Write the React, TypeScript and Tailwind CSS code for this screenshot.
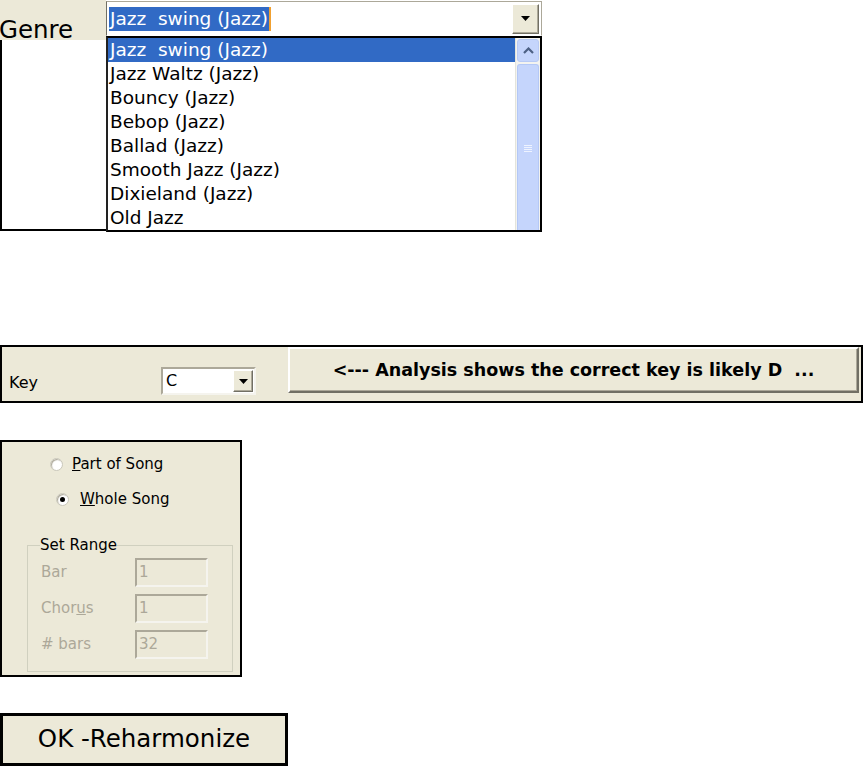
import React from "react";

const genres = [
  "Jazz  swing (Jazz)",
  "Jazz Waltz (Jazz)",
  "Bouncy (Jazz)",
  "Bebop (Jazz)",
  "Ballad (Jazz)",
  "Smooth Jazz (Jazz)",
  "Dixieland (Jazz)",
  "Old Jazz",
];

const DownArrow = () => (
  <svg width="9" height="5" viewBox="0 0 9 5">
    <path d="M0 0 H9 L4.5 5 Z" fill="#000" />
  </svg>
);

const DropButton = ({ className }: { className: string }) => (
  <div
    className={
      "flex items-center justify-center bg-[#ece9d8] border border-t-white border-l-white border-r-[#716f64] border-b-[#716f64] shadow-[inset_-1px_-1px_0_#aca899] " +
      className
    }
  >
    <DownArrow />
  </div>
);

const Radio = ({ checked }: { checked?: boolean }) => (
  <div className="w-[13px] h-[13px] rounded-full bg-white border border-[#c9c7ba] shadow-[inset_1px_1px_1px_#aca899] flex items-center justify-center">
    {checked && <div className="w-[5px] h-[5px] rounded-full bg-black" />}
  </div>
);

const RangeRow = ({ label, value }: { label: React.ReactNode; value: string }) => (
  <div className="flex items-center h-[29px]">
    <div className="w-[107px] pl-[13px] text-[15px] text-[#aca899]">{label}</div>
    <div className="w-[73px] h-[29px] bg-[#ece9d8] border-2 border-t-[#aca899] border-l-[#aca899] border-r-[#f5f4ee] border-b-[#f5f4ee] pl-[2px] text-[15px] text-[#aca899] leading-[25px]">
      {value}
    </div>
  </div>
);

export default function App() {
  return (
    <div className="bg-white w-[864px] h-[766px] text-black" style={{ fontFamily: '"DejaVu Sans", sans-serif' }}>
      {/* Genre combo */}
      <div className="flex w-[542px] h-[231px]">
        <div className="w-[106px] flex flex-col">
          <div className="h-[40px] bg-[#ece9d8] flex items-end">
            <span className="text-[24.5px] leading-none mb-[-2px] ml-[-1px]">Genre</span>
          </div>
          <div className="flex-1 border-l-2 border-b-2 border-black" />
        </div>
        <div className="w-[436px] flex flex-col">
          <div className="h-[37px] pt-[1px]">
            <div className="h-[35px] flex items-center bg-white border border-t-[#aca899] border-l-[#716f64] border-r-[#aca899] border-b-white pl-[2px] pr-[2px]">
              <div className="flex-1 flex items-center">
                <span className="bg-[#316ac5] text-white text-[18.5px] leading-[24px] px-[1px] border-r-2 border-[#f0a030] whitespace-pre">
                  {genres[0]}
                </span>
              </div>
              <DropButton className="w-[27px] h-[30px]" />
            </div>
          </div>
          <div className="flex-1 flex border-2 border-black border-l-[#222] bg-white">
            <div className="flex-1">
              {genres.map((g, i) => (
                <div
                  key={g}
                  className={
                    "h-[24px] leading-[24px] pl-[2px] text-[18.5px] whitespace-pre " +
                    (i === 0 ? "bg-[#316ac5] text-white" : "text-black")
                  }
                >
                  {g}
                </div>
              ))}
            </div>
            <div className="w-[25px] flex flex-col bg-[#f3f3f0] border-l border-[#e4e4dc] px-[1px] pt-[1px]">
              <div className="h-[23px] rounded-[3px] bg-[#c5d5fc] border border-[#b8caf5] flex items-center justify-center">
                <svg width="11" height="7" viewBox="0 0 11 7">
                  <path d="M1 6 L5.5 1.5 L10 6" stroke="#4d6185" strokeWidth="2.2" fill="none" />
                </svg>
              </div>
              <div className="flex-1 mt-[2px] rounded-t-[3px] bg-[#c5d5fc] border border-b-0 border-[#b4c8f6] flex items-center justify-center">
                <svg width="8" height="8" viewBox="0 0 8 8">
                  <path d="M0 1.5 H8 M0 3.5 H8 M0 5.5 H8 M0 7.5 H8" stroke="#eef3ff" strokeWidth="1" />
                </svg>
              </div>
            </div>
          </div>
        </div>
      </div>

      {/* Key bar */}
      <div className="mt-[114px] w-[863px] h-[58px] border-2 border-black bg-[#ece9d8] flex items-start">
        <div className="ml-[7px] mt-[27px] text-[16px] leading-[18px] w-[152px]">Key</div>
        <div className="mt-[20px] w-[95px] h-[28px] bg-white border-2 border-t-[#aca899] border-l-[#aca899] border-r-[#f5f4ee] border-b-[#f5f4ee] flex items-center pl-[3px]">
          <span className="flex-1 text-[16px]">C</span>
          <DropButton className="w-[20px] h-[22px] mr-[1px]" />
        </div>
        <div className="ml-[32px] w-[571px] h-[46px] bg-[#ece9d8] border-2 border-t-white border-l-white border-r-[#716f64] border-b-[#716f64] shadow-[inset_-1px_-1px_0_#aca899] flex items-center justify-center">
          <span className="text-[17.5px] font-bold whitespace-pre">{"<--- Analysis shows the correct key is likely D  ..."}</span>
        </div>
      </div>

      {/* Range panel */}
      <div className="mt-[37px] w-[242px] h-[237px] border-2 border-black bg-[#ece9d8] pt-[14px]">
        <div className="flex items-center h-[16px] ml-[48px] gap-[9px]">
          <Radio />
          <span className="text-[15px] leading-none">
            <u>P</u>art of Song
          </span>
        </div>
        <div className="flex items-center h-[16px] ml-[54px] mt-[19px] gap-[11px]">
          <Radio checked />
          <span className="text-[15px] leading-none">
            <u>W</u>hole Song
          </span>
        </div>
        <div className="relative ml-[25px] mt-[38px] w-[206px] h-[127px] border border-[#d0d0bf] pt-[12px]">
          <span className="absolute left-[12px] top-[-9px] bg-[#ece9d8] text-[15px] leading-[16px]">Set Range</span>
          <div className="flex flex-col gap-[7px]">
            <RangeRow label="Bar" value="1" />
            <RangeRow
              label={
                <>
                  Chor<u>u</u>s
                </>
              }
              value="1"
            />
            <RangeRow label="# bars" value="32" />
          </div>
        </div>
      </div>

      {/* OK button */}
      <div className="mt-[36px] w-[288px] h-[53px] border-[3px] border-black bg-[#ece9d8] flex items-center justify-center">
        <span className="text-[24.5px]">OK -Reharmonize</span>
      </div>
    </div>
  );
}
